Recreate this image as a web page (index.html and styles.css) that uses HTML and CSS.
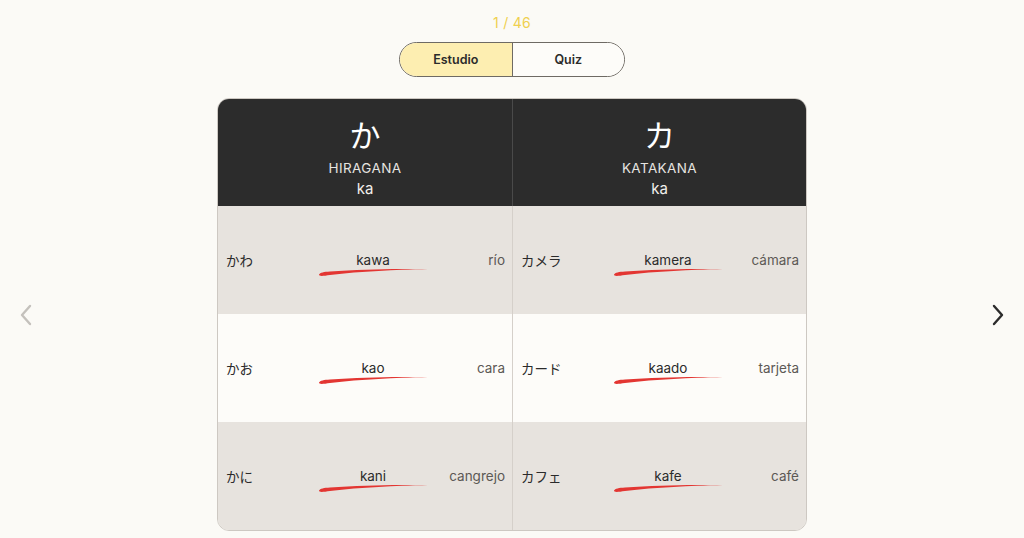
FILE: index.html
```html
<!DOCTYPE html>
<html lang="es">
<head>
    <meta charset="UTF-8">
    <meta name="viewport" content="width=device-width, initial-scale=1.0">
    <title>Kana</title>
    <link rel="stylesheet" href="styles.css">
</head>
<body>
    <div class="page">
        <div class="counter">1 / 46</div>
        <div class="mode-toggle">
            <button class="mode active">Estudio</button>
            <button class="mode">Quiz</button>
        </div>

        <div class="stage">
            <button class="nav nav-prev" aria-label="Anterior">
                <svg width="14" height="22" viewBox="0 0 14 22"><path d="M11 2 L3 11 L11 20" fill="none" stroke="currentColor" stroke-width="2.4" stroke-linecap="round" stroke-linejoin="round"/></svg>
            </button>

            <div class="card">
                <div class="side">
                    <div class="head">
                        <div class="kana">か</div>
                        <div class="script">HIRAGANA</div>
                        <div class="romaji">ka</div>
                    </div>
                    <div class="row">
                        <span class="word">かわ</span>
                        <span class="reading">kawa<svg class="brush" viewBox="0 0 110 10" preserveAspectRatio="none"><path d="M1 7.6 C2 5.4 6 4.8 12 4.4 C45 2.3 85 1.2 110 2.6 C85 2.3 45 4.3 12 8 C6 8.8 1 9.8 1 7.6 Z"/></svg></span>
                        <span class="meaning">río</span>
                    </div>
                    <div class="row">
                        <span class="word">かお</span>
                        <span class="reading">kao<svg class="brush" viewBox="0 0 110 10" preserveAspectRatio="none"><path d="M1 7.6 C2 5.4 6 4.8 12 4.4 C45 2.3 85 1.2 110 2.6 C85 2.3 45 4.3 12 8 C6 8.8 1 9.8 1 7.6 Z"/></svg></span>
                        <span class="meaning">cara</span>
                    </div>
                    <div class="row">
                        <span class="word">かに</span>
                        <span class="reading">kani<svg class="brush" viewBox="0 0 110 10" preserveAspectRatio="none"><path d="M1 7.6 C2 5.4 6 4.8 12 4.4 C45 2.3 85 1.2 110 2.6 C85 2.3 45 4.3 12 8 C6 8.8 1 9.8 1 7.6 Z"/></svg></span>
                        <span class="meaning">cangrejo</span>
                    </div>
                </div>

                <div class="side">
                    <div class="head">
                        <div class="kana">カ</div>
                        <div class="script">KATAKANA</div>
                        <div class="romaji">ka</div>
                    </div>
                    <div class="row">
                        <span class="word">カメラ</span>
                        <span class="reading">kamera<svg class="brush" viewBox="0 0 110 10" preserveAspectRatio="none"><path d="M1 7.6 C2 5.4 6 4.8 12 4.4 C45 2.3 85 1.2 110 2.6 C85 2.3 45 4.3 12 8 C6 8.8 1 9.8 1 7.6 Z"/></svg></span>
                        <span class="meaning">cámara</span>
                    </div>
                    <div class="row">
                        <span class="word">カード</span>
                        <span class="reading">kaado<svg class="brush" viewBox="0 0 110 10" preserveAspectRatio="none"><path d="M1 7.6 C2 5.4 6 4.8 12 4.4 C45 2.3 85 1.2 110 2.6 C85 2.3 45 4.3 12 8 C6 8.8 1 9.8 1 7.6 Z"/></svg></span>
                        <span class="meaning">tarjeta</span>
                    </div>
                    <div class="row">
                        <span class="word">カフェ</span>
                        <span class="reading">kafe<svg class="brush" viewBox="0 0 110 10" preserveAspectRatio="none"><path d="M1 7.6 C2 5.4 6 4.8 12 4.4 C45 2.3 85 1.2 110 2.6 C85 2.3 45 4.3 12 8 C6 8.8 1 9.8 1 7.6 Z"/></svg></span>
                        <span class="meaning">café</span>
                    </div>
                </div>
            </div>

            <button class="nav nav-next" aria-label="Siguiente">
                <svg width="14" height="22" viewBox="0 0 14 22"><path d="M3 2 L11 11 L3 20" fill="none" stroke="currentColor" stroke-width="2.4" stroke-linecap="round" stroke-linejoin="round"/></svg>
            </button>
        </div>
    </div>
</body>
</html>
```

FILE: styles.css
```css
body {
    margin: 0;
    background: #fbfaf6;
    font-family: Inter, "Noto Sans CJK JP", sans-serif;
    color: #2b2b2b;
    overflow: hidden;
}

.page {
    display: flex;
    flex-direction: column;
    align-items: center;
    padding-top: 14px;
}

.counter {
    font-size: 14px;
    line-height: 18px;
    color: #efd04f;
    letter-spacing: 0.3px;
}

.mode-toggle {
    display: flex;
    margin-top: 10px;
    width: 226px;
    height: 35px;
    border: 1px solid #6e6a64;
    border-radius: 18px;
    overflow: hidden;
    box-sizing: border-box;
}

.mode {
    flex: 1;
    border: none;
    background: #fdfcf9;
    font-family: Inter, sans-serif;
    font-size: 12.5px;
    font-weight: 600;
    color: #2b2b2b;
    padding: 0;
}

.mode + .mode {
    border-left: 1px solid #6e6a64;
}

.mode.active {
    background: #fdeeb1;
}

.stage {
    align-self: stretch;
    display: flex;
    justify-content: space-between;
    align-items: center;
    margin-top: 21px;
    padding: 0 19px;
}

.nav {
    border: none;
    background: none;
    padding: 0;
    width: 14px;
    height: 22px;
    color: #2b2b2b;
}

.nav-prev {
    color: #c4c1bc;
}

.card {
    display: grid;
    grid-template-columns: 1fr 1fr;
    width: 590px;
    border: 1px solid #cdc8c2;
    border-radius: 12px;
    overflow: hidden;
    box-sizing: border-box;
}

.side + .side {
    border-left: 1px solid #d5d0ca;
}

.side + .side .head {
    border-left: 1px solid #4a4a4a;
    margin-left: -1px;
}

.head {
    height: 107px;
    background: #2c2c2c;
    color: #fff;
    display: flex;
    flex-direction: column;
    align-items: center;
    padding-top: 16px;
    box-sizing: border-box;
}

.kana {
    font-family: "Noto Sans CJK JP", sans-serif;
    font-size: 31px;
    line-height: 38px;
}

.script {
    font-size: 13.5px;
    line-height: 17px;
    color: #e6e4e0;
    letter-spacing: 0.4px;
    margin-top: 7px;
}

.romaji {
    font-size: 15px;
    line-height: 20px;
    color: #f2f0ec;
    margin-top: 2px;
}

.row {
    height: 108px;
    display: grid;
    grid-template-columns: 92px 110px 1fr;
    align-items: center;
    padding: 0 7px 0 8px;
    background: #e7e3de;
    font-size: 13.5px;
}

.row:nth-child(3) {
    background: #fdfcf9;
}

.word {
    font-family: "Noto Sans CJK JP", sans-serif;
    color: #2b2b2b;
}

.reading {
    position: relative;
    text-align: center;
    color: #2b2b2b;
    line-height: 17px;
}

.brush {
    position: absolute;
    left: 0;
    top: 15px;
    width: 110px;
    height: 10px;
    fill: #e33632;
}

.meaning {
    text-align: right;
    color: #5c5955;
}
```
